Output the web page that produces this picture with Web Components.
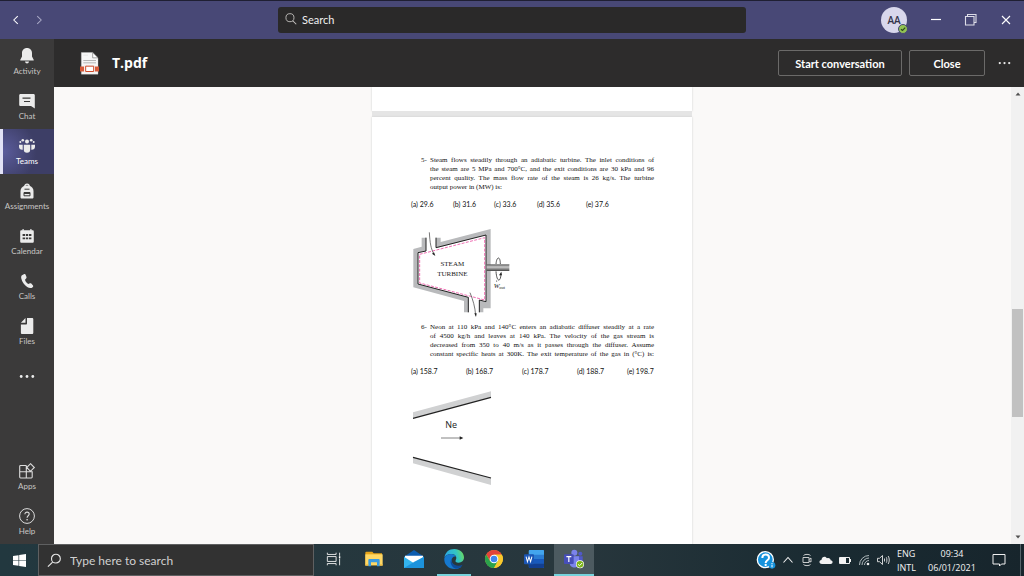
<!DOCTYPE html>
<html lang="en">
<head>
<meta charset="utf-8">
<title>T.pdf | Microsoft Teams</title>
<style>
  html, body { margin: 0; height: 100%; }
  body { font-family: "Open Sans", "Noto Sans", sans-serif; background: #faf9f8; overflow: hidden; }
</style>
</head>
<body>
<desktop-screen></desktop-screen>
<script>
const ICONS = {
  back: ['0 0 16 16', '<path d="M10 3.500 5.500 8 10 12.500" fill="none" stroke="#fff" stroke-width="1.200"/>'],
  forward: ['0 0 16 16', '<path d="M6 3.500 10.500 8 6 12.500" fill="none" stroke="#a9a9c6" stroke-width="1.200"/>'],
  search: ['0 0 16 16', '<circle cx="6.800" cy="6.500" r="4.600" fill="none" stroke="#c8c6c4"/><path d="m10 10 4 4" stroke="#c8c6c4" stroke-width="1.200"/>'],
  minimise: ['0 0 16 16', '<path d="M3 7.500h10" stroke="#fff" stroke-width="1.200"/>'],
  restore: ['0 0 16 16', '<path d="M2.500 5.500v7.500h8.500V4.500H2.500zM4.500 4.500V2.500h8.500v8h-2" fill="none" stroke="#dddde8" stroke-width="1.100"/>'],
  close: ['0 0 16 16', '<path d="m4 4 8 8M12 4l-8 8" stroke="#fff" stroke-width="1.100"/>'],
  check: ['0 0 10 10', '<circle cx="5" cy="5" r="4.500" fill="#92c353" stroke="#464775"/><path d="m3 5.200 1.500 1.300L7.200 3.600" fill="none" stroke="#2d4a1e" stroke-width="1.200"/>'],
  pdf: ['0 0 57 68', '<path d="M4 1h34l16 16v49H4z" fill="#f6f6f6" stroke="#ccc"/><path d="M38 1v16h16z" fill="#fff" stroke="#777" stroke-width="2"/><path d="M10 9h14" stroke="#ddd" stroke-width="2"/><path d="M10 25h38M10 32h38" stroke="#b5b5b5" stroke-width="3"/><path d="M0 43h57v15H0z" fill="#d65a3a"/><path d="M12 39h33v22H12z" fill="#f3efec"/><path d="M17 42h24v16H17z" fill="#fff" stroke="#cf4a2a" stroke-width="3"/>'],
  activity: ['0 0 16 16', '<path d="M8 0c3 0 5 2.200 5 5v3.500l1.700 3.200v.8H1.300v-.8L3 8.500V5c0-2.800 2-5 5-5z"/><path d="M6 13.500h4c-.2 1.200-1 2-2 2s-1.800-.8-2-2z"/>'],
  chat: ['0 0 16 16', '<path d="M1.500 1h13c.8 0 1.300.6 1.300 1.300V15.500L12 13H1.500C.8 13 .2 12.400.2 11.700V2.300C.2 1.600.8 1 1.500 1z"/><path d="M3.500 5.200h8M5 8.500h6" stroke="#3b3a39" stroke-width="1.200"/>'],
  teams: ['0 0 16 16', '<circle cx="8" cy="3.500" r="2"/><circle cx="3.800" cy="2.200" r="1.300"/><circle cx="12.200" cy="2.200" r="1.300"/><circle cx="1.300" cy="4" r="1"/><circle cx="14.700" cy="4" r="1"/><path d="M4.800 6.800h6.400v4.700a3.200 3.200 0 0 1-6.400 0zM0 6.800h3.700v5C1.500 12 0 10.600 0 8.800zM12.300 6.800H16v2c0 1.800-1.500 3.200-3.700 3z"/>'],
  assignments: ['0 0 16 16', '<path d="M5.800 3.500c0-3.300 4.400-3.300 4.400 0" fill="none" stroke="#ebebeb" stroke-width="1.300"/><path d="M6 2.500h4c3 1 4.500 3 4.500 5.500v6.200c0 .8-.5 1.300-1.300 1.300H2.800c-.8 0-1.300-.5-1.300-1.300V8C1.500 5.500 3 3.500 6 2.500z"/><path d="M5.500 6.200h5M5 9.500h6v3.300H5zM5 10.500h6" fill="none" stroke="#3b3a39"/>'],
  calendar: ['0 0 16 16', '<path d="M2.500 2.200h11c.8 0 1.300.5 1.300 1.300v10c0 .8-.5 1.300-1.300 1.300h-11c-.8 0-1.300-.5-1.300-1.300v-10c0-.8.500-1.300 1.300-1.300zM3.500 1h1.200v2H3.500zM11.300 1h1.200v2h-1.200z"/><path d="M6.800 7h2.400M10 7h2.400M3.600 10.300H6M6.800 10.300h2.400M3.600 7H6M10 10.300h2.400" stroke="#3b3a39" stroke-width="1.800"/>'],
  calls: ['0 0 16 16', '<path d="M3 2.300 5.300 1c.6-.3 1 0 1.200.5l1 2.600c.2.500 0 1-.4 1.400L6 6.700c.6 2 1.700 3.400 3.400 4.400l1.500-.8c.5-.3 1-.2 1.400.200l1.700 1.900c.4.500.3 1-.1 1.500-1.500 1.600-3.600 1.500-5.700.1C5.300 12.200 3 9 2.300 5.600 2 4.100 2.200 3 3 2.300z"/>'],
  files: ['0 0 16 16', '<path d="M8 0h5c.8 0 1.300.5 1.300 1.300v13.400c0 .8-.5 1.300-1.300 1.300H3.200c-.8 0-1.300-.5-1.300-1.300V6.500H7c.6 0 1-.4 1-1z"/><path d="M6.500 0v4.800H1.900z"/>'],
  more: ['0 0 16 16', '<circle cx="2.200" cy="7.500" r="1.400"/><circle cx="8" cy="7.500" r="1.400"/><circle cx="13.800" cy="7.500" r="1.400"/>'],
  apps: ['0 0 16 16', '<path d="M7.300 2.500H1.600c-.5 0-.9.400-.9.900v10.700c0 .5.400.9.900.9h10.700c.5 0 .9-.4.900-.9V8.700H.7M7.300 2.500V15M11.500.7l3.800 3.800-3.800 3.800-3.800-3.800z" fill="none" stroke="#dcdcdc" stroke-width="1.100"/>'],
  help: ['0 0 16 16', '<circle cx="8" cy="8" r="7.400" fill="none" stroke="#dcdcdc"/><path d="M5.900 6.200c0-2.900 4.300-2.700 4.300-.1 0 1.700-2.100 1.700-2.100 3.600" fill="none" stroke="#dcdcdc" stroke-width="1.100"/><circle cx="8.100" cy="11.700" r=".8"/>'],
  windows: ['0 0 40 40', '<path d="m0 6 17-2.500V19H0zM19 3.200 40 0v19H19zM0 21h17v15.500L0 34zM19 21h21v19l-21-3.200z" fill="#fff"/>'],
  find: ['0 0 16 16', '<circle cx="9.500" cy="6" r="4.700" fill="none" stroke="#e6e6e6" stroke-width="1.200"/><path d="M6 9.700 1 14.500" stroke="#e6e6e6" stroke-width="1.300"/>'],
  taskview: ['0 0 40 40', '<path d="M1 2v5h25V2M1 38v-5h25v5M1 13h25v14H1zM36 2v9M36 19v19" fill="none" stroke="#f0f0f0" stroke-width="2.600"/><path d="M34 12h4v6h-4z" fill="#fff"/>'],
  explorer: ['0 0 54 44', '<path d="M1 3c0-2 1-3 3-3h18l4 5h25v36H1z" fill="#e8a519"/><path d="M1 8h52v33H1z" fill="#ffd865"/><path d="M10 25c0-2 1-3 3-3h28c2 0 3 1 3 3v19h-8V32H18v12h-8z" fill="#3a9be0"/><path d="M1 38h9v4H1zM44 38h9v4h-9z" fill="#eebd46"/>'],
  mail: ['0 0 60 54', '<path d="M0 20 30 0l30 20v34H0z" fill="#0c5db0"/><path d="M3 17h54v15L30 44 3 32z" fill="#fff"/><path d="M0 20 30 40 60 20v34H0z" fill="#34b4ee"/><path d="M0 54 34 34l26-14v34z" fill="#1c93dc"/>'],
  edge: ['0 0 60 60', '<defs><linearGradient id="a" x1="0" y1=".4" x2="1" y2=".2"><stop stop-color="#2ba7e6"/><stop offset=".6" stop-color="#33c4c4"/><stop offset="1" stop-color="#70dd55"/></linearGradient></defs><path d="M1 27C3 10 15 0 31 0c17 0 29 12 29 25 0 10-7 16-16 16-8 0-11-3-9-7 6-10-2-19-12-19C11 15 2 21 1 27z" fill="url(#a)"/><path d="M1 27c3-8 11-12 21-12 6 0 12 3 14 8-8-2-13 4-13 11 0 12 10 20 20 20 5 0 9-1 12-4-6 7-14 10-23 10C13 60-1 46 1 27z" fill="#1679cf"/><path d="M23 29c-8 9 0 27 13 30 8 0 15-4 20-12-11 6-26 4-32-7-2-4-2-8-1-11z" fill="#0e4d9c"/>'],
  chrome: ['0 0 54 54', '<circle cx="27" cy="27" r="27" fill="#f9c92d"/><path d="M3.600 13.500A27 27 0 0 1 50.400 13.500L27 14 15 33z" fill="#e2443a"/><path d="M3.600 13.500A27 27 0 0 0 27 54L39 33H15z" fill="#2ba24c"/><path d="M27 14h23.400A27 27 0 0 1 27 54l12-21z" fill="#f9c92d"/><circle cx="27" cy="27" r="13" fill="#fff"/><circle cx="27" cy="27" r="10" fill="#3f86ee"/>'],
  word: ['0 0 58 52', '<rect x="14" width="44" height="52" rx="3" fill="#2b7cd3"/><path d="M14 3c0-2 1-3 3-3h38c2 0 3 1 3 3v11H14z" fill="#43a5ee"/><path d="M14 26h44v13H14z" fill="#185abd"/><path d="M14 39h44v10c0 2-1 3-3 3H17c-2 0-3-1-3-3z" fill="#123f91"/><rect y="12" width="29" height="29" rx="3" fill="#1b56b5"/><path d="m6 19 4 15 4.500-14L19 34l4-15" fill="none" stroke="#fff" stroke-width="3"/>'],
  teamsapp: ['0 0 60 56', '<circle cx="49" cy="12" r="6" fill="#5059c9"/><path d="M34 20h22v17c0 8-12 12-17 4z" fill="#5059c9"/><circle cx="31" cy="9" r="9" fill="#7b83eb"/><path d="M17 20h28v20c0 18-28 18-28 0z" fill="#7b83eb"/><rect y="14" width="29" height="29" rx="3" fill="#464eb8"/><path d="M7 21h15M14.500 21v16" stroke="#fff" stroke-width="3.500"/><circle cx="48" cy="44" r="12" fill="#fff"/><circle cx="48" cy="44" r="10" fill="#7cb518"/><path d="m42 44 4.500 4 8-8" fill="none" stroke="#fff" stroke-width="3"/>'],
  assist: ['0 0 54 54', '<circle cx="25" cy="26" r="24" fill="#1592dc" stroke="#fff" stroke-width="4"/><path d="M16 21c0-14 20-13 20-1 0 8-10 8-10 16" fill="none" stroke="#fff" stroke-width="6"/><circle cx="26" cy="42" r="3.500" fill="#fff"/><circle cx="45" cy="43" r="10" fill="#1592dc"/><path d="M45 41v8M45 36v3" stroke="#fff" stroke-width="3"/>'],
  chevron: ['0 0 14 14', '<path d="m2.500 9.500 4.500-5 4.500 5" fill="none" stroke="#f0f0f0" stroke-width="1.100"/>'],
  meet: ['0 0 14 14', '<path d="M3 4.500h6v5H3zM9 6.500l2-1.500v4L9 8M3.500 2.500c1-1.500 6-1.500 7 0M3.500 11.500c1 1.500 6 1.500 7 0" fill="none" stroke="#dcdcdc" stroke-width=".9"/>'],
  cloud: ['0 0 14 14', '<path d="M3 11c-3 0-3.500-3.500-.6-4C2.700 3.500 6.500 2.500 8 5.300c2-.8 3.600.4 3.600 2 2.800.2 2.600 3.700 0 3.700z" fill="#f2f2f2"/>'],
  battery: ['0 0 14 14', '<path d="M1.500 4.500h10v6h-10zM12.500 6v3" fill="none" stroke="#f0f0f0"/><path d="M2 5h6v5H2z" fill="#f4f4f4"/>'],
  wifi: ['0 0 14 14', '<path d="M2.500 12A9.500 9.500 0 0 1 12 2.500M5 12a7 7 0 0 1 7-7M7.500 12A4.500 4.500 0 0 1 12 7.500" fill="none" stroke="#c0c7ca" stroke-width=".9"/><circle cx="11" cy="11" r="1.300" fill="#f0f0f0"/>'],
  volume: ['0 0 14 14', '<path d="M1.500 5.300h2L6.500 2.500v9L3.500 8.700h-2zM8.500 5.500v3M10.300 4.300c.8 1.500.8 4 0 5.400M12.200 3c1.400 2.500 1.400 5.500 0 8" fill="none" stroke="#e4e4e4" stroke-width=".9"/>'],
  notice: ['0 0 14 14', '<path d="M1 1.500h12v9.500H9.500L7.500 13v-2H1z" fill="none" stroke="#f0f0f0"/>'],
  up: ['0 0 8 8', '<path d="m1.500 5.500 2.500-3 2.500 3z" fill="#505050"/>'],
  down: ['0 0 8 8', '<path d="m1.500 2.500 2.500 3 2.500-3z" fill="#505050"/>']
};

/* Registers an element whose open shadow root holds its own styles and markup. */
function define(name, render) {
  customElements.define(name, class extends HTMLElement {
    connectedCallback() {
      if (this.shadowRoot) return;
      const t = document.createElement('template');
      t.innerHTML = render(this);
      this.attachShadow({ mode: 'open' }).append(t.content.cloneNode(true));
    }
  });
}

define('ui-icon', el => {
  const [box, art] = ICONS[el.getAttribute('name')];
  return `<style>:host{display:block;width:16px;height:16px;flex:none;fill:#ebebeb}svg{display:block;width:100%;height:100%;overflow:visible}</style>
  <svg viewBox="${box}" aria-hidden="true">${art}</svg>`;
});

define('icon-button', el => `<style>
  :host{display:flex}
  button{flex:1;display:flex;align-items:center;justify-content:center;padding:0;border:0;background:none;font:inherit;color:inherit}
  </style><button aria-label="${el.getAttribute('label')}"><slot></slot></button>`);

define('title-bar', () => `<style>
  :host{display:grid;grid-template-columns:1fr minmax(0,468px) 1fr;align-items:center;height:38px;border-top:1px solid #1f1f33;background:#484876}
  nav{display:flex;padding-left:4px}
  nav icon-button{width:23px;height:24px}
  nav ui-icon{width:14px;height:14px}
  label{display:flex;align-items:center;gap:4px;height:26px;box-sizing:border-box;padding:0 6px 2px;background:#2a2929;border-radius:3px}
  label ui-icon{width:14px;height:14px}
  input{flex:1;min-width:0;padding:0;border:0;outline:0;background:none;color:#fff;font:11px Lato,"Open Sans",sans-serif}
  input::placeholder{color:#f0f0f0;opacity:1}
  .right{display:flex;justify-content:flex-end;align-items:center;padding-right:1px}
  .right icon-button{width:35px;height:36px}
  .avatar{position:relative;width:26px;height:26px;margin-right:11px;border-radius:50%;background:#d8d7ec;color:#33344a;font:600 10px/26px "Open Sans",sans-serif;text-align:center}
  .avatar ui-icon{position:absolute;right:-1px;bottom:-1px;width:10px;height:10px}
  </style>
  <nav><icon-button label="Back"><ui-icon name="back"></ui-icon></icon-button><icon-button label="Forward"><ui-icon name="forward"></ui-icon></icon-button></nav>
  <label><ui-icon name="search"></ui-icon><input type="text" placeholder="Search" aria-label="Search"></label>
  <div class="right"><div class="avatar">AA<ui-icon name="check"></ui-icon></div>
  <icon-button label="Minimise"><ui-icon name="minimise"></ui-icon></icon-button><icon-button label="Restore"><ui-icon name="restore"></ui-icon></icon-button><icon-button label="Close window"><ui-icon name="close"></ui-icon></icon-button></div>`);

define('rail-item', el => `<style>
  :host{display:flex;height:45px}
  button{flex:1;display:flex;flex-direction:column;align-items:center;gap:1px;min-width:0;padding:9px 0 0;border:0;background:none;color:#c8c6c4;font:8px/12px Lato,"Open Sans",sans-serif;white-space:nowrap}
  :host([active]) button{padding-right:3px;border-left:3px solid #e2e2f6;background:radial-gradient(circle at 0 50%,#5b5c9c,#3d3e66 60%);color:#fff}
  :host([plain]) button{padding:0;justify-content:center}
  </style><button aria-label="${el.getAttribute('label') || el.textContent}"><ui-icon name="${el.getAttribute('icon')}"></ui-icon><slot></slot></button>`);

define('app-rail', () => `<style>
  :host{display:flex;flex-direction:column;width:54px;flex:none;background:#3b3a3a}
  .space{flex:1}
  </style>
  <rail-item icon="activity">Activity</rail-item><rail-item icon="chat">Chat</rail-item><rail-item icon="teams" active>Teams</rail-item>
  <rail-item icon="assignments">Assignments</rail-item><rail-item icon="calendar">Calendar</rail-item><rail-item icon="calls">Calls</rail-item>
  <rail-item icon="files">Files</rail-item><rail-item icon="more" label="More apps" plain></rail-item>
  <div class="space"></div><rail-item icon="apps">Apps</rail-item><rail-item icon="help">Help</rail-item>`);

define('file-header', () => `<style>
  :host{display:flex;align-items:center;height:48px;padding:0 8px 0 26px;box-sizing:border-box;background:#2d2c2c;color:#fff}
  .file{width:19px;height:23px;margin-right:13px}
  h1{flex:1;margin:0;font-size:14px;line-height:20px;font-weight:700}
  .act{height:26px;box-sizing:border-box;border:1px solid #6b6a69;border-radius:2px;background:none;color:#fff;font:700 11px Lato,"Open Sans",sans-serif;padding:0;margin-right:7px}
  .start{width:124px}.close{width:76px}
  .more{width:24px;height:24px}.more ui-icon{width:13px;height:13px}
  </style>
  <ui-icon class="file" name="pdf"></ui-icon><h1>T.pdf</h1>
  <button class="act start">Start conversation</button><button class="act close">Close</button>
  <icon-button class="more" label="More options"><ui-icon name="more"></ui-icon></icon-button>`);

define('exam-question', el => `<style>
  :host{display:block}
  .body{display:grid;grid-template-columns:9px 1fr;padding-left:10px;font:7px/9px "Liberation Serif",serif;color:#111}
  .options{display:grid;grid-template-columns:${el.getAttribute('columns')};margin-top:8px;font:7px/9px Lato,"Open Sans",sans-serif;color:#111;white-space:nowrap}
  </style><div class="body"><span>${el.getAttribute('number')}-</span><div><slot></slot></div></div>
  <div class="options">${el.getAttribute('options').split(',').map((o, i) => `<span>(${'abcde'[i]}) ${o}</span>`).join('')}</div>`);

define('text-line', el => `<style>:host{display:block;text-align:justify;text-align-last:${el.hasAttribute('last') ? 'left' : 'justify'}}</style><slot></slot>`);

define('turbine-figure', () => `<style>:host{display:block}svg{display:block;width:97px;height:89px;overflow:visible}</style>
  <svg viewBox="39 24 291 267" role="img" aria-label="Steam turbine">
  <defs><linearGradient id="s" x2="0" y2="1"><stop stop-color="#555"/><stop offset=".4" stop-color="#ccc"/><stop offset="1" stop-color="#444"/></linearGradient></defs>
  <path d="M40 87 65 80V53H78V93L54 98V192L205 232V277H192V243L40 202ZM108 53H122V66L272 27V265H250V277H238V240L258 245V45L108 85Z" fill="#b9babc"/>
  <path d="M78 53V93L54 98V192L205 232V277M108 53V83L258 45V245L238 240V277" fill="none" stroke="#222" stroke-width="3"/>
  <path d="M59 103 254 53V240L59 189Z" fill="none" stroke="#f06fb4" stroke-width="3" stroke-dasharray="9 4"/>
  <path d="M260 133h68v20h-68z" fill="url(#s)"/>
  <path d="M88 37C90 68 92 86 103 104M210 218c9 22 15 42 17 68" fill="none" stroke="#333" stroke-width="2"/>
  <path d="m106 108-10-7 6-4zM228 291l-5-11h7z" fill="#222"/>
  <path d="M301 132C301 108 290 108 288 132M288 154c2 32 13 34 15 10" fill="none" stroke="#333" stroke-width="2.500"/><path d="m304 155-7 11h9z" fill="#222"/>
  <g font-family="Liberation Serif, serif" fill="#222"><text x="157" y="137" font-size="21" text-anchor="middle">STEAM</text><text x="157" y="167" font-size="21" text-anchor="middle">TURBINE</text>
  <text x="281" y="204" font-size="21" font-style="italic">W</text><text x="298" y="208" font-size="13">out</text></g><circle cx="290" cy="183" r="1.500"/>
  </svg>`);

define('diffuser-figure', () => `<style>:host{display:block}svg{display:block;width:78px;height:94px;overflow:visible}</style>
  <svg viewBox="39 33 234 282" role="img" aria-label="Neon diffuser">
  <path d="M39 97 273 34V52L39 115ZM39 232 273 294V315L39 250Z" fill="#d0d1d2"/>
  <path d="M39 115 273 52M39 232 273 294" stroke="#222" stroke-width="3.500"/>
  <text x="136" y="143" font-family="Open Sans, sans-serif" font-size="27" fill="#222">Ne</text>
  <path d="M123 174h60" stroke="#444" stroke-width="2"/><path d="m190 174-11-5v10z" fill="#222"/></svg>`);

define('pdf-viewer', () => `<style>
  :host{display:grid;grid-template-columns:1fr 13px;column-gap:1px;flex:1;min-height:0;background:#faf9f8}
  .pages{display:flex;flex-direction:column;align-items:center;overflow:hidden;min-height:0}
  .previous,.sheet{width:320px;flex:none;box-sizing:border-box;background:#fff;box-shadow:0 0 2px #ccc}
  .previous{height:24px}
  .gap{width:320px;height:6px;flex:none;background:#e5e5e5}
  .sheet{min-height:440px;padding:39px 38px 0 39px}
  turbine-figure{margin:19px 0 6px 2px}
  diffuser-figure{margin:15px 0 0 2px}
  .bar{display:flex;flex-direction:column;align-items:center;background:#f1f1f1;padding:3px 0}
  .bar ui-icon{width:8px;height:8px}
  .track{flex:1;width:11px;display:grid;grid-template-rows:208fr 107fr 114fr}
  .thumb{grid-row:2;background:#c1c1c1}
  </style>
  <div class="pages"><div class="previous"></div><div class="gap"></div><article class="sheet">
  <exam-question number="5" columns="42px 41px 43px 49px 1fr" options="29.6,31.6,33.6,35.6,37.6">
    <text-line>Steam flows steadily through an adiabatic turbine. The inlet conditions of</text-line>
    <text-line>the steam are 5 MPa and 700°C, and the exit conditions are 30 kPa and 96</text-line>
    <text-line>percent quality. The mass flow rate of the steam is 26 kg/s. The turbine</text-line>
    <text-line last>output power in (MW) is:</text-line>
  </exam-question>
  <turbine-figure></turbine-figure>
  <exam-question number="6" columns="55px 56px 55px 50px 1fr" options="158.7,168.7,178.7,188.7,198.7">
    <text-line>Neon at 110 kPa and 140°C enters an adiabatic diffuser steadily at a rate</text-line>
    <text-line>of 4500 kg/h and leaves at 140 kPa. The velocity of the gas stream is</text-line>
    <text-line>decreased from 350 to 40 m/s as it passes through the diffuser. Assume</text-line>
    <text-line>constant specific heats at 300K. The exit temperature of the gas in (°C) is:</text-line>
  </exam-question>
  <diffuser-figure></diffuser-figure>
  </article></div>
  <div class="bar"><ui-icon name="up"></ui-icon><div class="track"><div class="thumb"></div></div><ui-icon name="down"></ui-icon></div>`);

define('task-bar', () => `<style>
  :host{display:flex;height:32px;background:linear-gradient(90deg,#22383f,#28373d 55%,#1a2b32 80%,#17252c);color:#f3f3f3}
  .start{width:38px}.start ui-icon{width:13px;height:13px}
  label{flex:0 1 276px;min-width:0;box-sizing:border-box;display:flex;align-items:center;gap:8px;padding:0 8px;border:1px solid #5f6061;background:#323232}
  label ui-icon{width:15px;height:15px}
  input{flex:1;min-width:0;padding:0;border:0;outline:0;background:none;color:#fff;font:12px Lato,"Open Sans",sans-serif}
  input::placeholder{color:#d0d0d0;opacity:1}
  .apps{display:flex;flex:1}
  .apps icon-button{width:40px;box-sizing:border-box;border-bottom:2px solid transparent}
  .apps ui-icon{width:18px;height:18px}
  .apps .big{width:20px;height:20px}
  .apps .small{width:14px;height:14px}
  .apps .open{border-image:linear-gradient(90deg,transparent 10%,#76d3dc 10% 90%,transparent 90%) 1}
  .apps .on{border-color:#76d3dc;background:#4c5a60}
  .tray{display:flex}
  .tray icon-button{width:19px}.tray ui-icon{width:14px;height:14px}
  .tray .wide{width:24px}.tray .wide ui-icon{width:18px;height:18px}
  .lang,.clock{font-size:9px;line-height:14px;padding-top:3px}
  .lang{margin-left:5px;width:29px}
  .clock{width:52px;text-align:center;white-space:nowrap}
  .tray .notice{width:42px}
  .peek{width:3px;border-left:1px solid #56646a}
  </style>
  <icon-button class="start" label="Start"><ui-icon name="windows"></ui-icon></icon-button>
  <label><ui-icon name="find"></ui-icon><input type="text" placeholder="Type here to search" aria-label="Type here to search"></label>
  <div class="apps">
  <icon-button label="Task view"><ui-icon class="small" name="taskview"></ui-icon></icon-button><icon-button label="File Explorer"><ui-icon name="explorer"></ui-icon></icon-button>
  <icon-button label="Mail"><ui-icon class="big" name="mail"></ui-icon></icon-button><icon-button class="open" label="Edge"><ui-icon class="big" name="edge"></ui-icon></icon-button>
  <icon-button label="Chrome"><ui-icon name="chrome"></ui-icon></icon-button><icon-button label="Word"><ui-icon class="big" name="word"></ui-icon></icon-button>
  <icon-button class="on" label="Teams"><ui-icon class="big" name="teamsapp"></ui-icon></icon-button></div>
  <div class="tray"><icon-button class="wide" label="Get help"><ui-icon name="assist"></ui-icon></icon-button>
  <icon-button label="Hidden icons"><ui-icon name="chevron"></ui-icon></icon-button><icon-button label="Meet now"><ui-icon name="meet"></ui-icon></icon-button>
  <icon-button label="OneDrive"><ui-icon name="cloud"></ui-icon></icon-button><icon-button label="Battery"><ui-icon name="battery"></ui-icon></icon-button>
  <icon-button label="Network"><ui-icon name="wifi"></ui-icon></icon-button><icon-button label="Volume"><ui-icon name="volume"></ui-icon></icon-button>
  <div class="lang"><div>ENG</div><div>INTL</div></div><div class="clock"><div>09:34</div><div>06/01/2021</div></div>
  <icon-button class="notice" label="Notifications"><ui-icon name="notice"></ui-icon></icon-button><div class="peek"></div></div>`);

define('desktop-screen', () => `<style>
  :host{display:flex;flex-direction:column;height:100vh}
  .work{display:flex;flex:1;min-height:0}
  main{display:flex;flex-direction:column;flex:1;min-width:0}
  </style><title-bar></title-bar><div class="work"><app-rail></app-rail><main><file-header></file-header><pdf-viewer></pdf-viewer></main></div><task-bar></task-bar>`);
</script>
</body>
</html>
